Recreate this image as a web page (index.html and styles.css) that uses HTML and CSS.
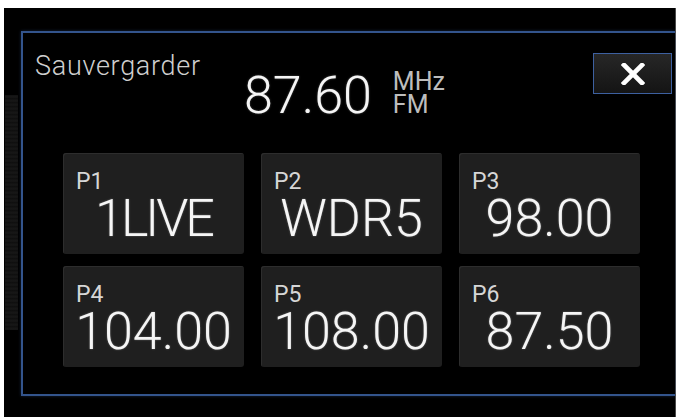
FILE: index.html
```html
<!DOCTYPE html>
<html lang="fr">
<head>
<meta charset="utf-8">
<title>Sauvergarder</title>
<link rel="stylesheet" href="styles.css">
</head>
<body>
<div class="screen">
  <div class="gutter"><div class="strip"></div></div>
  <div class="panel">
    <div class="header">
      <div class="title">Sauvergarder</div>
      <div class="freq">87.60</div>
      <div class="units"><div>MHz</div><div>FM</div></div>
      <button class="close" aria-label="Fermer">
        <svg width="24" height="22" viewBox="0 0 24 22">
          <path d="M3 2 L21 20 M21 2 L3 20" stroke="#ffffff" stroke-width="4.6" stroke-linecap="square" fill="none"/>
        </svg>
      </button>
    </div>
    <div class="grid">
      <div class="preset"><div class="label">P1</div><div class="value narrow">1LIVE</div></div>
      <div class="preset"><div class="label">P2</div><div class="value">WDR5</div></div>
      <div class="preset"><div class="label">P3</div><div class="value">98.00</div></div>
      <div class="preset"><div class="label">P4</div><div class="value">104.00</div></div>
      <div class="preset"><div class="label">P5</div><div class="value">108.00</div></div>
      <div class="preset"><div class="label">P6</div><div class="value">87.50</div></div>
    </div>
  </div>
</div>
</body>
</html>
```

FILE: styles.css
```css
html, body {
  margin: 0;
  padding: 0;
  background: #ffffff;
  width: 676px;
  height: 417px;
  overflow: hidden;
}

body {
  padding: 8px 0 0 4px;
  box-sizing: border-box;
  font-family: Roboto, "DejaVu Sans", sans-serif;
}

.screen {
  display: flex;
  width: 672px;
  height: 409px;
  box-sizing: border-box;
  padding-top: 23px;
  background: #000000;
  border-right: 1px solid #4a4a4a;
}

.gutter {
  width: 17px;
  flex: none;
}

.strip {
  margin: 64px 0 0 1px;
  width: 13px;
  height: 235px;
  background: repeating-linear-gradient(180deg, #111111 0, #181818 2px, #0d0d0d 4px);
}

.panel {
  flex: 1;
  height: 365px;
  box-sizing: border-box;
  border: 2px solid #33548c;
  border-right: none;
  box-shadow: 0 0 3px rgba(60, 100, 170, 0.35);
}

.header {
  display: flex;
  align-items: flex-start;
  height: 120px;
  box-sizing: border-box;
  padding: 19px 3px 0 12px;
}

.title {
  width: 209px;
  flex: none;
  margin-top: 1px;
  font-size: 27px;
  line-height: 26px;
  font-weight: 300;
  letter-spacing: 0.7px;
  color: #cfcfcf;
}

.freq {
  margin-top: 18px;
  font-size: 52px;
  line-height: 52px;
  font-weight: 300;
  color: #f5f5f5;
  text-shadow: 0 0 2px rgba(255, 255, 255, 0.35);
}

.units {
  margin: 18px 0 0 21px;
  font-size: 25px;
  line-height: 23px;
  font-weight: 400;
  color: #bdbdbd;
}

.close {
  margin: 1px 0 0 auto;
  width: 79px;
  height: 41px;
  padding: 0;
  display: flex;
  align-items: center;
  justify-content: center;
  border: 1px solid #3d60a0;
  background: linear-gradient(180deg, #272727 0%, #141414 100%);
}

.close svg {
  display: block;
}

.grid {
  display: grid;
  grid-template-columns: repeat(3, 181px);
  grid-template-rows: repeat(2, 101px);
  column-gap: 17px;
  row-gap: 12px;
  margin-left: 40px;
}

.preset {
  display: flex;
  flex-direction: column;
  background: #1f1f1f;
  border-radius: 3px;
  box-shadow: inset 1px 1px 0 #2d2d2d;
  padding: 19px 0 0 13px;
  box-sizing: border-box;
}

.label {
  font-size: 23px;
  line-height: 20px;
  font-weight: 400;
  color: #d6d6d6;
}

.value {
  margin: 1px 0 0 -13px;
  text-align: center;
  font-size: 52px;
  line-height: 52px;
  font-weight: 300;
  color: #f5f5f5;
  text-shadow: 0 0 2px rgba(255, 255, 255, 0.35);
}

.value.narrow {
  letter-spacing: -3px;
}
```
